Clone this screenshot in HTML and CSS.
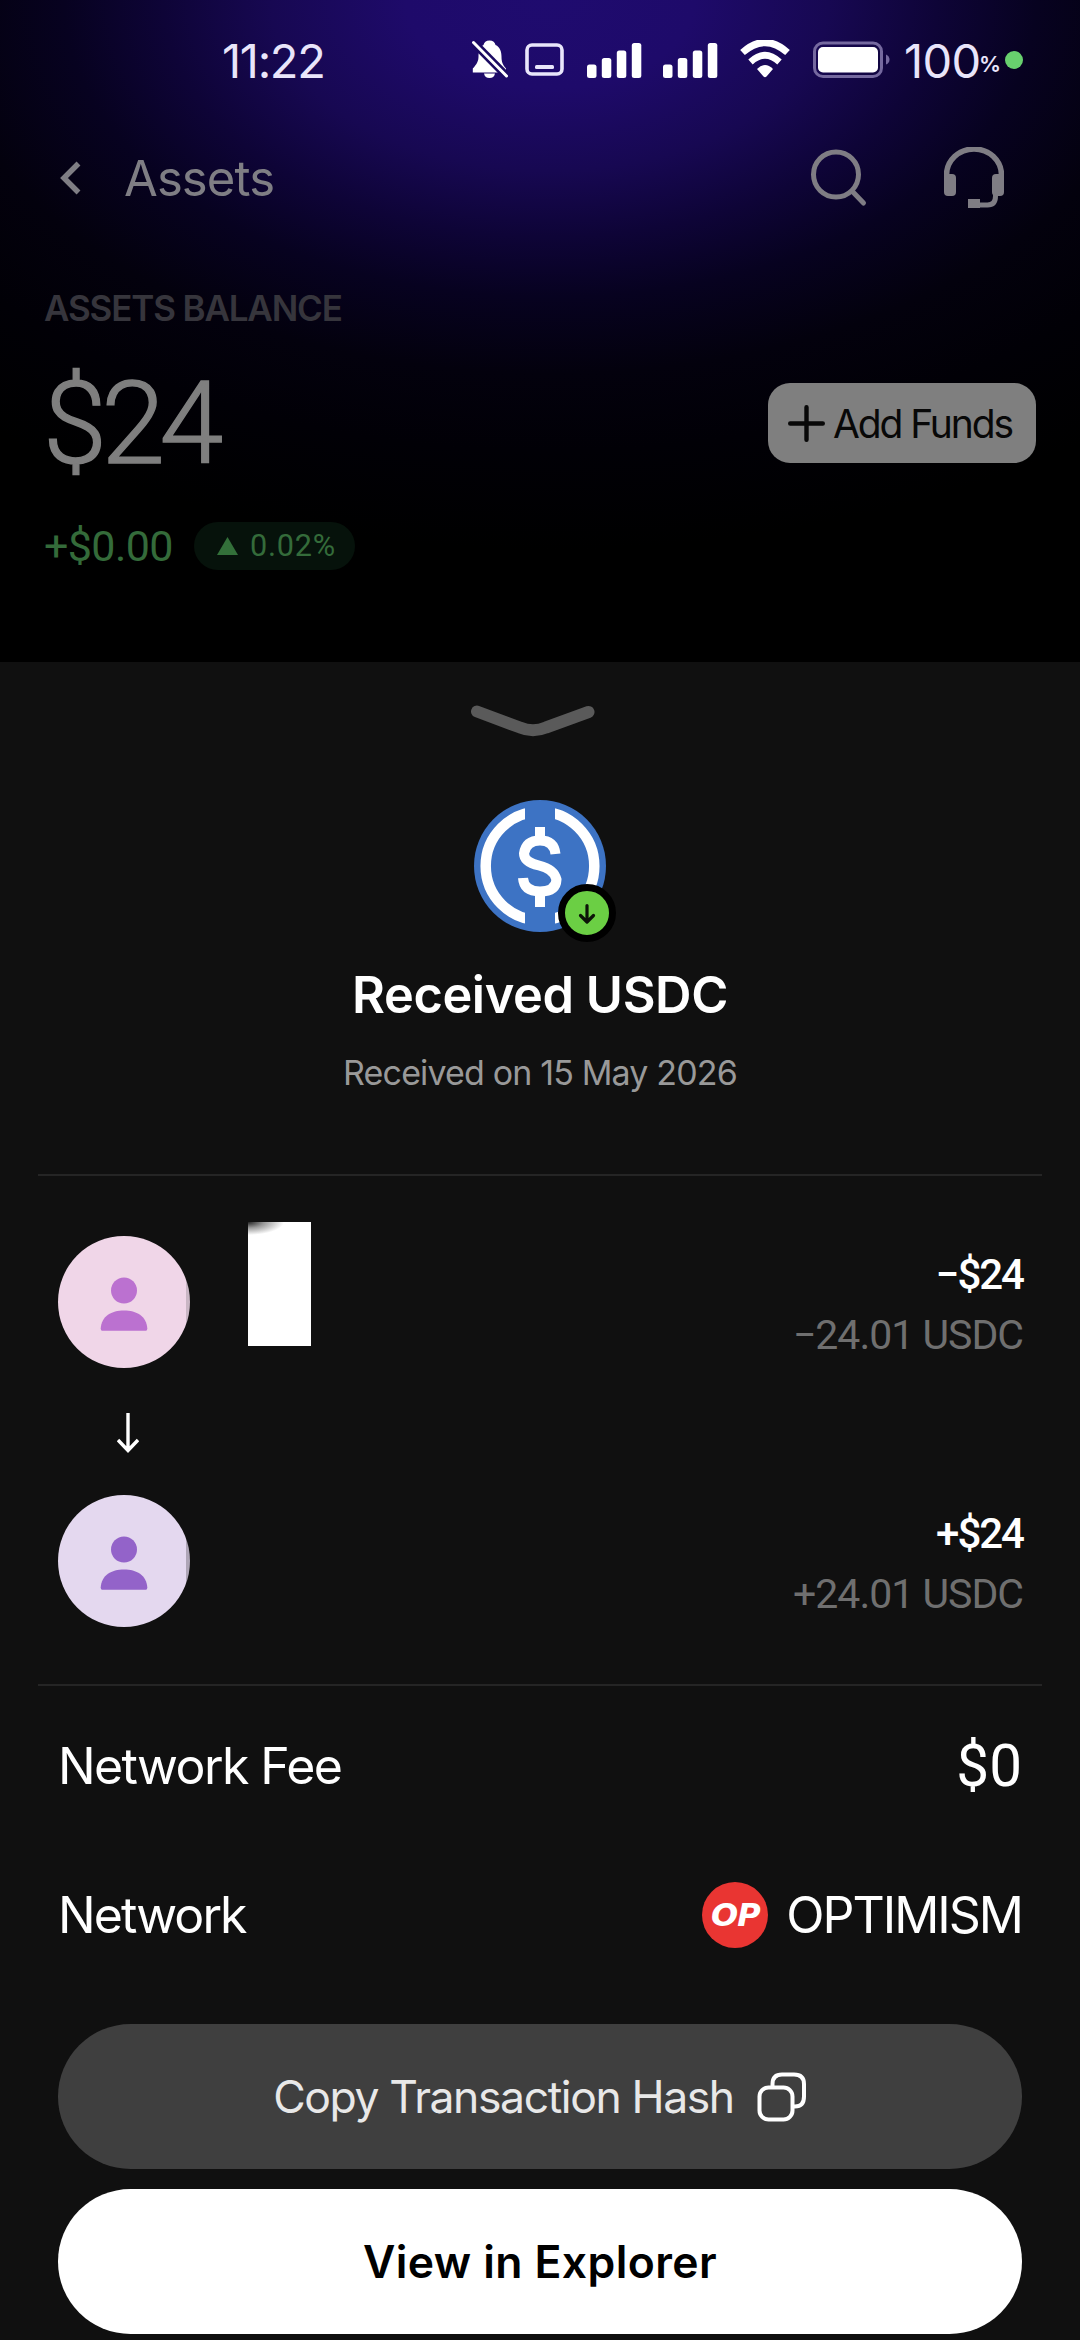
FILE: index.html
```
<!DOCTYPE html>
<html lang="en">
<head>
<meta charset="utf-8">
<title>Received USDC</title>
<link rel="stylesheet" href="styles.css">
</head>
<body>
<div class="screen">
  <section class="backdrop">
    <div class="status">
      <span class="clock">11:22</span>
      <div class="status-icons">
        <svg class="i-bell" width="37" height="40" viewBox="0 0 37 40">
          <path d="M18.500.5c3.500 0 5.500 2 6 4.500 4.500 2 6 6.500 6 11.500 0 5 1 8 4.500 12v4H1.800v-4C6 24 7.500 21 7.500 16.500c0-5 1.500-9.500 5-11.500C13 2.500 15 .5 18.500.5z" fill="#fff"/>
          <path d="M13 33.500h11c-.5 3-2.500 4.500-5.500 4.500s-5-1.500-5.500-4.500z" fill="#fff"/>
          <path d="M2.500 2.500L35.500 36" stroke="#1b0a62" stroke-width="8"/>
          <path d="M2.500 2.500L35.500 36" stroke="#fff" stroke-width="3" stroke-linecap="round"/>
        </svg>
        <svg class="i-box" width="39" height="40" viewBox="0 0 39 40">
          <rect x="2" y="5" width="35" height="29" rx="5" fill="none" stroke="#e9e6fb" stroke-width="3.600"/>
          <rect x="10" y="25" width="19" height="4" rx="1.500" fill="#e9e6fb"/>
        </svg>
        <svg class="i-signal" width="55" height="40" viewBox="0 0 55 40" fill="#fff">
          <rect x="0" y="24.500" width="9.500" height="13.500" rx="2.500"/><rect x="14.800" y="18" width="9.500" height="20" rx="2.500"/><rect x="29.800" y="10.500" width="9.500" height="27.500" rx="2.500"/><rect x="44.800" y="3" width="9.500" height="35" rx="2.500"/>
        </svg>
        <svg class="i-signal2" width="55" height="40" viewBox="0 0 55 40" fill="#fff">
          <rect x="0" y="24.500" width="9.500" height="13.500" rx="2.500"/><rect x="14.800" y="18" width="9.500" height="20" rx="2.500"/><rect x="29.800" y="10.500" width="9.500" height="27.500" rx="2.500"/><rect x="44.800" y="3" width="9.500" height="35" rx="2.500"/>
        </svg>
        <svg class="i-wifi" width="52" height="40" viewBox="0 0 52 40">
          <path d="M3.500 12.500Q26-7.500 48.500 12.500" fill="none" stroke="#fff" stroke-width="7"/>
          <path d="M11.500 22Q26 8.500 40.500 22" fill="none" stroke="#fff" stroke-width="6.500"/>
          <path d="M18 29Q26 21 34 29L27.500 36.500Q26 38 24.500 36.500z" fill="#fff"/>
        </svg>
        <svg class="i-battery" width="77" height="40" viewBox="0 0 77 40">
          <rect x="1.500" y="3" width="67" height="33.500" rx="8.500" fill="none" stroke="#75699f" stroke-width="3"/>
          <rect x="5" y="7" width="60" height="25.500" rx="5" fill="#fff"/>
          <path d="M73 14.500q3.500 1.500 3.500 5t-3.500 5z" fill="#75699f"/>
        </svg>
        <span class="level">100</span><span class="percent">%</span>
        <span class="dot"></span>
      </div>
    </div>
    <div class="nav">
      <svg class="back" width="22" height="34" viewBox="0 0 22 34"><path d="M18.500 2.500L4 17l14.500 14.500" fill="none" stroke="#7f7e84" stroke-width="5.500"/></svg>
      <span class="page">Assets</span>
      <svg class="search" width="57" height="60" viewBox="0 0 57 60" fill="none" stroke="#7f7d84" stroke-width="5"><circle cx="25" cy="26.500" r="22.500"/><path d="M41 43L52.500 55" stroke-linecap="round"/></svg>
      <svg class="support" width="60" height="62" viewBox="0 0 60 62"><path d="M2.500 32V28a27.500 26 0 0 1 55 0v4" fill="none" stroke="#7f7d84" stroke-width="5.500"/><rect x="0" y="27" width="12" height="22" rx="4" fill="#7f7d84"/><rect x="48" y="27" width="12" height="22" rx="4" fill="#7f7d84"/><path d="M51.500 46v3q0 9-8 9H36" fill="none" stroke="#7f7d84" stroke-width="5"/><rect x="24" y="52" width="12" height="9" fill="#7f7d84"/></svg>
    </div>
    <div class="label">ASSETS BALANCE</div>
    <div class="balance">
      <span class="total">$24</span>
      <div class="add">
        <svg width="37" height="37" viewBox="0 0 37 37"><path d="M18.500 2.200v32.600M2.200 18.500h32.600" stroke="#080808" stroke-width="4.400" stroke-linecap="round"/></svg>
        <span>Add Funds</span>
      </div>
    </div>
    <div class="change">
      <span class="delta">+$0.00</span>
      <div class="pill">
        <svg width="21" height="18" viewBox="0 0 21 18"><path d="M10.500 0L21 18H0z" fill="#33703a"/></svg>
        <span>0.02%</span>
      </div>
    </div>
  </section>

  <section class="sheet">
    <svg class="handle" width="126" height="32" viewBox="0 0 126 32"><path d="M7 6.500L50 22.500Q63 28 76 22.500L118.500 7" fill="none" stroke="#5a5a5a" stroke-width="12" stroke-linecap="round" stroke-linejoin="round"/></svg>
    <div class="coin">
      <svg width="132" height="132" viewBox="0 0 132 132">
        <circle cx="66" cy="66" r="66" fill="#3d73c4"/>
        <circle cx="66" cy="66" r="54.300" fill="none" stroke="#fff" stroke-width="10.500"/>
        <path d="M51 4h30v20H51zM51 108h30v20H51z" fill="#3d73c4"/>
        <g fill="none" stroke="#fff">
          <path d="M81.500 54Q80 40.500 66 40.500T50 53.500Q50 62 65 65.500T82.500 79.500Q82 91.500 66 91.500T49 78" stroke-width="10"/>
          <path d="M66 27v14M66 92v15" stroke-width="10"/>
        </g>
      </svg>
      <div class="badge"><svg width="44" height="44" viewBox="0 0 44 44"><path d="M22 14.500v16M15.500 24.500L22 31l6.500-6.500" fill="none" stroke="#0c1408" stroke-width="3.200" stroke-linecap="round" stroke-linejoin="round"/></svg></div>
    </div>
    <h1>Received USDC</h1>
    <p class="date">Received on 15 May 2026</p>

    <div class="parties">
      <div class="party">
        <div class="avatar pink"><svg width="48" height="54" viewBox="0 0 48 54" fill="#bb71d0"><circle cx="24" cy="13.500" r="13"/><path d="M.7 51.500C1.500 39 11.500 33.500 24 33.500S46.500 39 47.300 51.500q0 2.200-1.500 2.200H2.200Q.7 53.700.7 51.500z"/></svg></div>
        <div class="blank"></div>
        <div class="amounts"><span class="fiat">−$24</span><span class="crypto">−24.01 USDC</span></div>
      </div>
      <svg class="down" width="22" height="41" viewBox="0 0 22 41"><path d="M11 0v37M1 27l10 10.500L21 27" fill="none" stroke="#fff" stroke-width="3.400"/></svg>
      <div class="party">
        <div class="avatar violet"><svg width="48" height="54" viewBox="0 0 48 54" fill="#9363c9"><circle cx="24" cy="13.500" r="13"/><path d="M.7 51.500C1.500 39 11.500 33.500 24 33.500S46.500 39 47.300 51.500q0 2.200-1.500 2.200H2.200Q.7 53.700.7 51.500z"/></svg></div>
        <div class="amounts"><span class="fiat">+$24</span><span class="crypto">+24.01 USDC</span></div>
      </div>
    </div>

    <div class="row fee"><span>Network Fee</span><span class="cost">$0</span></div>
    <div class="row network"><span>Network</span><div class="chain"><span class="op"><span>OP</span></span><span class="chain-name">OPTIMISM</span></div></div>

    <div class="button copy"><span>Copy Transaction Hash</span>
      <svg width="50" height="50" viewBox="0 0 50 50" fill="none" stroke="#fff" stroke-width="4"><rect x="2.500" y="15.500" width="33" height="32" rx="9"/><path d="M15.500 15.500V12q0-9.500 9.500-9.500h12q10 0 10 9.500v12.500q0 10-9 10h-2.500"/></svg>
    </div>
    <div class="button view">View in Explorer</div>
  </section>
</div>
</body>
</html>
```
FILE: styles.css
```
* { box-sizing: border-box; }
body { margin: 0; background: #101010; }
.screen {
  width: 1080px;
  height: 2340px;
  overflow: hidden;
  display: flex;
  flex-direction: column;
  font-family: Inter, Roboto, sans-serif;
  color: #fff;
  white-space: nowrap;
}
svg { display: block; flex: none; }

.backdrop {
  height: 662px;
  flex: none;
  background: #000 radial-gradient(ellipse 900px 550px at 550px 0,
    #1f0b6f 0%, #1e0a6a 16%, #170852 31%, #0e0437 43%, #070220 54%, #03010d 68%, #010006 82%, #000 100%);
}
.status {
  height: 120px;
  display: flex;
  align-items: center;
  padding-left: 222px;
}
.clock, .level {
  font: 400 47px/60px Inter, sans-serif;
  color: #e9e5fa;
}
.clock { width: 249px; letter-spacing: -1.3px; padding-top: 1px; }
.status-icons { display: flex; align-items: center; }
.i-box { margin-left: 17px; }
.i-signal { margin-left: 23px; }
.i-signal2 { margin-left: 21px; }
.i-wifi { margin-left: 21px; }
.i-battery { margin-left: 22px; }
.level { margin-left: 14px; width: 75px; letter-spacing: -.6px; padding-top: 1px; }
.percent { font: 600 22px/30px Inter, sans-serif; color: #e9e5fa; padding-top: 8px; width: 26px; }
.dot { width: 18px; height: 18px; border-radius: 50%; background: #68d06e; }

.nav {
  height: 116px;
  display: flex;
  align-items: center;
  padding-left: 60px;
  color: #7f7e84;
}
.page { font-size: 49px; line-height: 60px; letter-spacing: -.9px; margin-left: 42px; width: 687px; padding-top: 2px; }
.support { margin-left: 76px; }

.label {
  margin: 52px 0 0 44px;
  font-size: 35px;
  line-height: 40px;
  font-weight: 600;
  letter-spacing: -1.150px;
  color: #36353c;
}
.balance {
  margin-top: 55px;
  height: 80px;
  padding: 0 44px 0 43px;
  display: flex;
  justify-content: space-between;
  align-items: center;
  color: #7f7f7f;
}
.total { font: 300 115px/80px Roboto, sans-serif; letter-spacing: -5.500px; padding-top: 2px; -webkit-text-stroke: 1.400px #7f7f7f; }
.add {
  width: 268px;
  height: 80px;
  border-radius: 22px;
  background: #7f7f7f;
  color: #080808;
  display: flex;
  align-items: center;
  gap: 8px;
  padding-left: 20px;
  font-size: 39px;
  letter-spacing: -2.100px;
}
.change {
  margin-top: 59px;
  padding-left: 44px;
  display: flex;
  align-items: center;
  height: 48px;
  color: #346b3a;
}
.delta { font: 400 43px/48px Roboto, sans-serif; letter-spacing: -.6px; width: 150px; }
.pill {
  width: 161px;
  height: 48px;
  border-radius: 24px;
  background: #06120b;
  display: flex;
  align-items: center;
  gap: 12px;
  padding-left: 23px;
  font: 400 30.600px/48px Roboto, sans-serif;
  letter-spacing: .8px;
}

.sheet {
  height: 1678px;
  flex: none;
  background: #101010;
  padding-top: 43px;
  display: flex;
  flex-direction: column;
  align-items: center;
}
.handle { margin-right: 14px; }
.coin { position: relative; margin-top: 63px; width: 132px; height: 132px; }
.badge {
  position: absolute;
  left: 84px;
  top: 84px;
  width: 58px;
  height: 58px;
  border-radius: 50%;
  border: 7px solid #000;
  background: #6bcf44;
}
h1 {
  margin: 33px 0 0;
  font-size: 50.500px;
  line-height: 60px;
  font-weight: 600;
  letter-spacing: -.4px;
}
.date { margin: 28px 0 0; font-size: 34px; line-height: 40px; letter-spacing: -.85px; color: #999; }
.parties {
  width: 1004px;
  height: 512px;
  margin-top: 81px;
  padding: 60px 19px 0 20px;
  border-top: 2px solid #252525;
  border-bottom: 2px solid #252525;
}
.party { display: flex; align-items: center; height: 132px; }
.avatar {
  width: 132px;
  height: 132px;
  border-radius: 50%;
  display: flex;
  justify-content: center;
  align-items: center;
  padding-top: 4px;
}
.pink { background: linear-gradient(90deg, #f0d6e8 97%, #c9b6c4 97%); }
.violet { background: linear-gradient(90deg, #e4d8ef 97%, #aea5b6 97%); }
.blank {
  align-self: flex-start;
  width: 63px;
  height: 124px;
  margin: -14px 0 0 58px;
  background: radial-gradient(ellipse 36px 13px at 0 0, #222 0%, #999 45%, #fff 100%);
}
.amounts { margin-left: auto; margin-top: 5px; display: flex; flex-direction: column; align-items: flex-end; line-height: 60px; font-family: Roboto, sans-serif; }
.fiat { font-size: 42px; font-weight: 500; letter-spacing: -2px; }
.crypto { font-size: 41px; letter-spacing: -1px; color: #6f6f6f; }
.down { margin: 45px 0 41px 59px; }

.row {
  width: 964px;
  height: 80px;
  display: flex;
  align-items: center;
  justify-content: space-between;
  font-size: 50px;
  letter-spacing: -1.600px;
}
.fee { margin-top: 40px; }
.cost { font: 400 58.400px/80px Roboto, sans-serif; letter-spacing: 0; }
.network { margin-top: 69px; letter-spacing: -1.900px; }
.chain { display: flex; align-items: center; }
.chain-name { letter-spacing: -2px; margin-left: 18px; }
.op {
  width: 66px;
  height: 66px;
  border-radius: 50%;
  background: #e93532;
  display: flex;
  align-items: center;
  justify-content: center;
  font: italic 700 32px/66px "DejaVu Sans", sans-serif;
  letter-spacing: -1px;
}
.button {
  width: 964px;
  height: 145px;
  border-radius: 73px;
  display: flex;
  align-items: center;
  justify-content: center;
}
.copy { margin-top: 69px; background: #3f3f3f; color: #e8e8e8; font-size: 44.500px; gap: 23px; letter-spacing: -1.400px; }
.view { margin-top: 20px; background: #fff; color: #000; font-size: 44.500px; font-weight: 600; letter-spacing: .4px; }
```
